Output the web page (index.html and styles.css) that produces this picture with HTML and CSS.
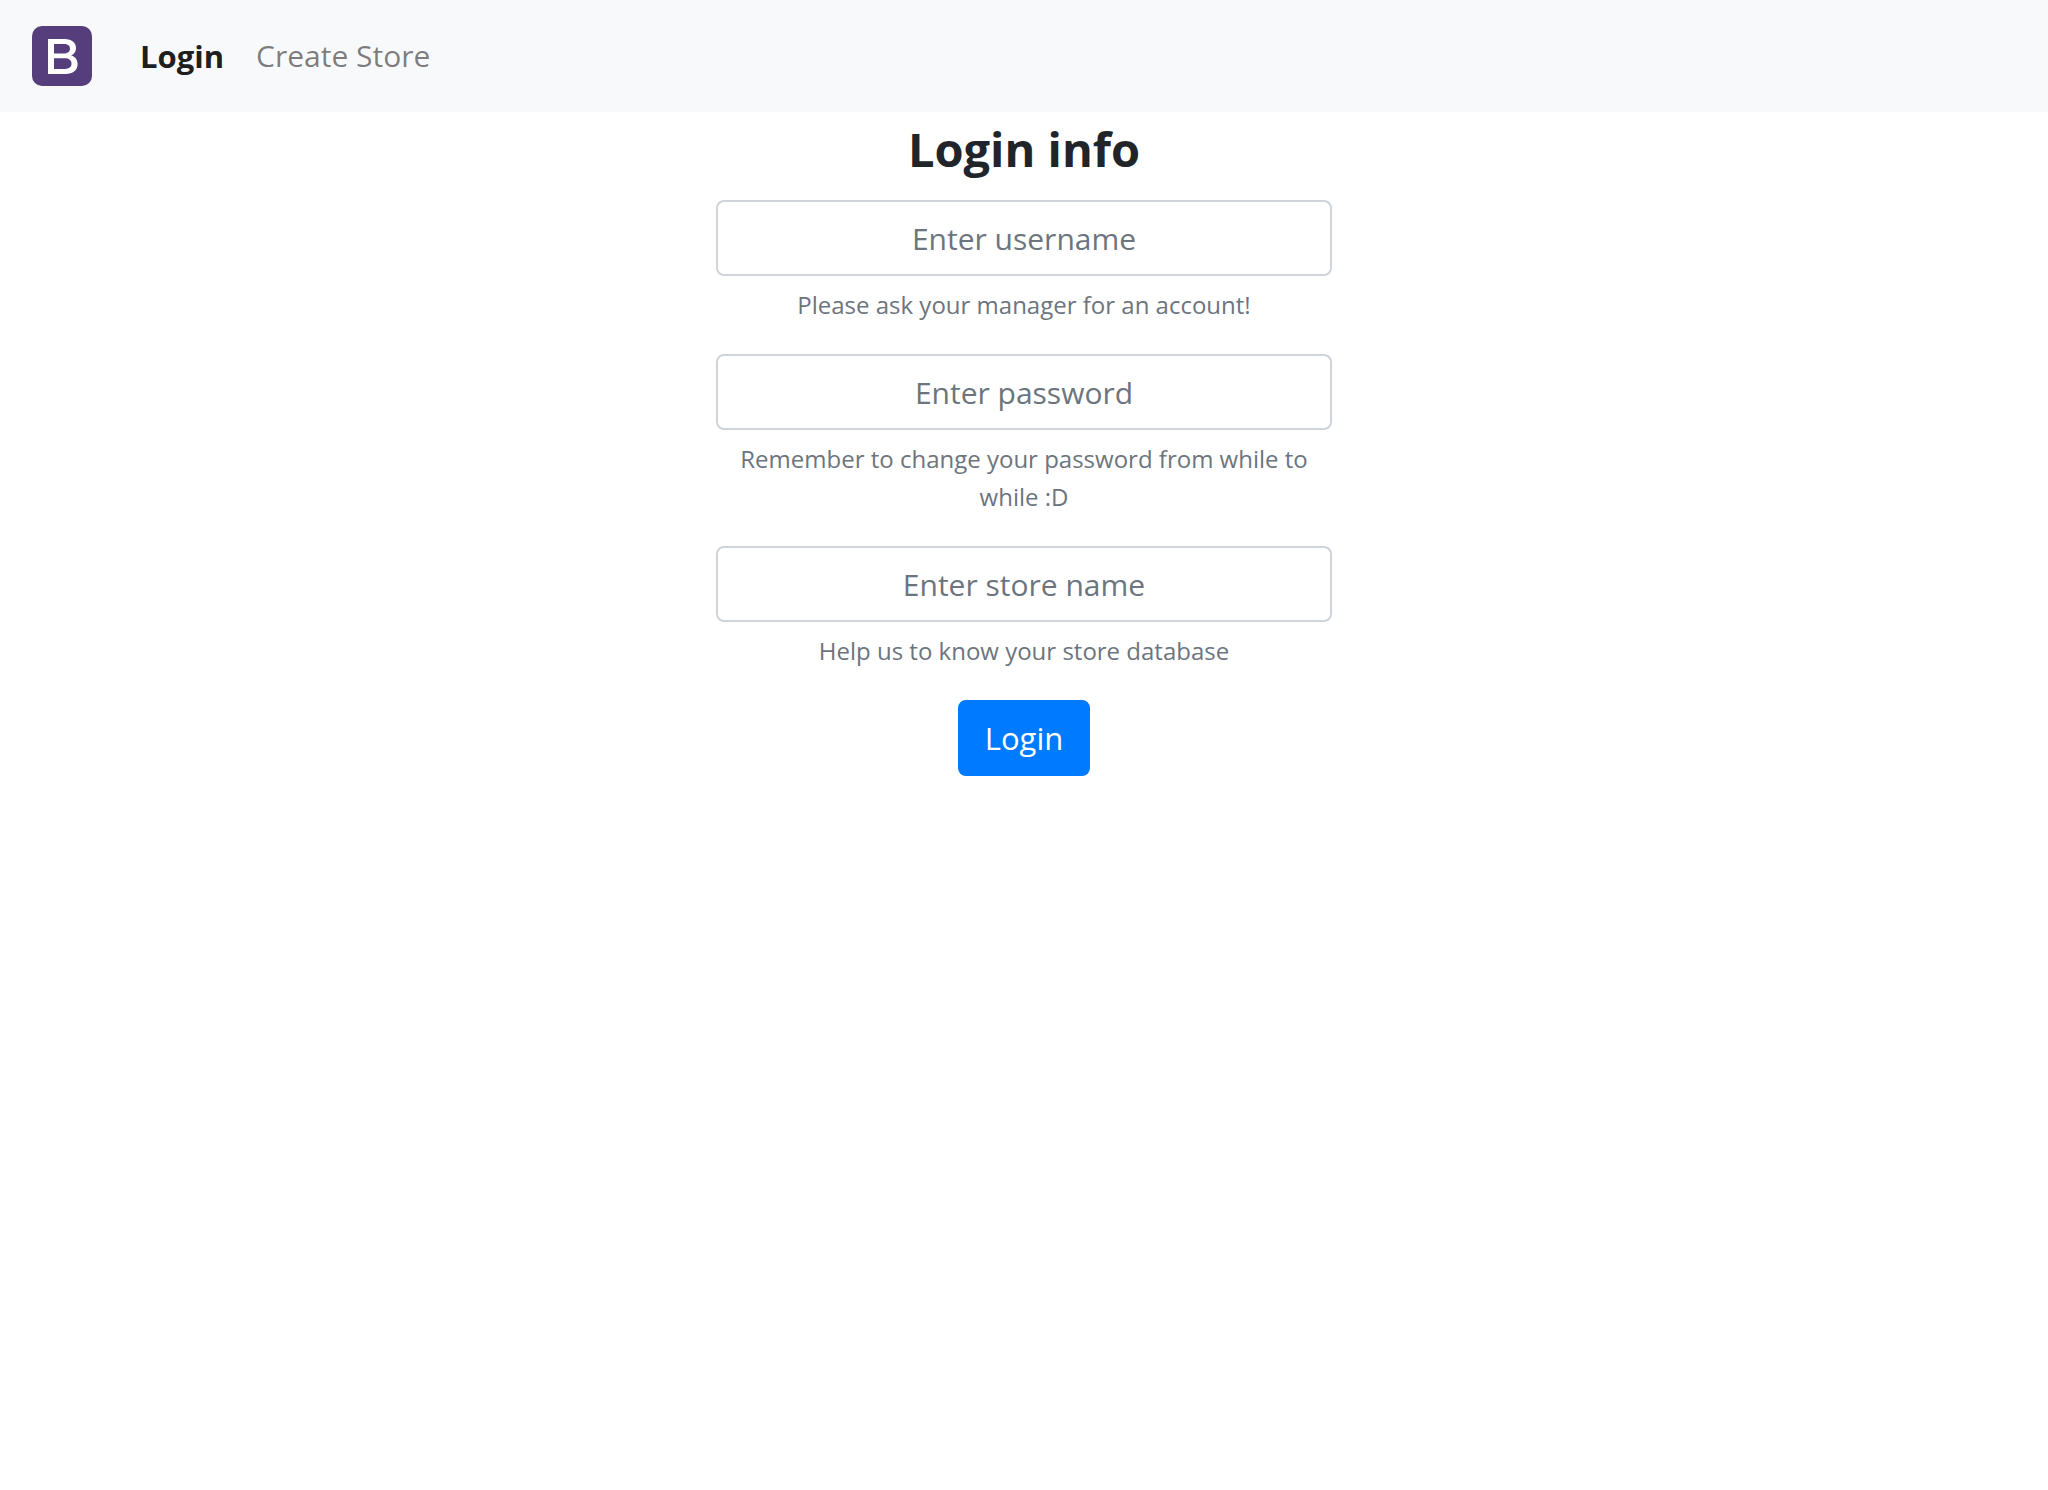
FILE: index.html
```html
<!DOCTYPE html>
<html lang="en">
<head>
  <meta charset="utf-8">
  <meta name="viewport" content="width=device-width, initial-scale=1">
  <title>Login</title>
  <link rel="stylesheet" href="styles.css">
</head>
<body>
  <nav class="navbar">
    <a class="navbar-brand" href="#" aria-label="Home">
      <svg class="logo" viewBox="0 0 60 60" aria-hidden="true">
        <rect width="60" height="60" rx="10" fill="#563d7c"/>
        <path fill="#fff" fill-rule="evenodd" d="M16 13H33C39.500 13 44 16.500 44 22C44 25.500 42.300 28.200 39.200 29.500C43.300 30.500 45.600 33.700 45.600 38C45.600 44.300 41 48 33.500 48H16ZM22 18V27.500H31.500C35.500 27.500 38 25.800 38 22.700C38 19.600 35.800 18 32 18ZM22 32.300V43H33C37.200 43 39.500 41 39.500 37.600C39.500 34.200 37 32.300 32.700 32.300Z"/>
      </svg>
    </a>
    <ul class="navbar-nav">
      <li><a class="nav-link nav-link-active" href="#" aria-current="page">Login</a></li>
      <li><a class="nav-link" href="#">Create Store</a></li>
    </ul>
  </nav>
  <main class="content">
    <form class="login-form">
      <h1 class="title">Login info</h1>
      <div class="form-group">
        <input class="form-control" type="text" placeholder="Enter username" aria-label="Username" aria-describedby="username-help">
        <small class="form-text" id="username-help">Please ask your manager for an account!</small>
      </div>
      <div class="form-group">
        <input class="form-control" type="password" placeholder="Enter password" aria-label="Password" aria-describedby="password-help">
        <small class="form-text" id="password-help">Remember to change your password from while to while :D</small>
      </div>
      <div class="form-group">
        <input class="form-control" type="text" placeholder="Enter store name" aria-label="Store name" aria-describedby="store-help">
        <small class="form-text" id="store-help">Help us to know your store database</small>
      </div>
      <button class="btn" type="submit">Login</button>
    </form>
  </main>
</body>
</html>
```
FILE: styles.css
```css
*,
*::before,
*::after {
  box-sizing: border-box;
}

body {
  margin: 0;
  background: #fff;
  color: #212529;
  font-family: "Open Sans", "Noto Sans", sans-serif;
  font-size: 30px;
  line-height: 48px;
}

.navbar {
  display: flex;
  align-items: center;
  gap: 32px;
  padding: 16px 32px;
  background: #f8f9fa;
}

.navbar-brand,
.logo {
  display: block;
}

.logo {
  width: 60px;
  height: 60px;
}

.navbar-nav {
  display: flex;
  margin: 0;
  padding: 0;
  list-style: none;
}

.nav-link {
  display: block;
  padding: 16px;
  color: rgba(0, 0, 0, 0.5);
  text-decoration: none;
}

.nav-link-active {
  color: rgba(0, 0, 0, 0.9);
  font-size: 31px;
  font-weight: 700;
}

.content {
  padding: 8px 16px;
}

.login-form {
  max-width: 616px;
  margin: 0 auto;
  text-align: center;
}

.title {
  margin: 0 0 22px;
  font-size: 47px;
  font-weight: 700;
  line-height: 58px;
}

.form-group {
  margin-bottom: 30px;
}

.form-control {
  display: block;
  width: 100%;
  padding: 13px 24px 11px;
  border: 2px solid #ced4da;
  border-radius: 8px;
  background: #fff;
  color: #495057;
  font: inherit;
  text-align: center;
}

.form-control::placeholder {
  color: #6c757d;
  opacity: 1;
}

.form-text {
  display: block;
  margin-top: 10px;
  color: #6c757d;
  font-size: 24px;
  line-height: 38px;
}

.btn {
  padding: 12px 25px;
  border: 2px solid #007bff;
  border-radius: 8px;
  background: #007bff;
  color: #fff;
  font: inherit;
  font-size: 31px;
}
```
